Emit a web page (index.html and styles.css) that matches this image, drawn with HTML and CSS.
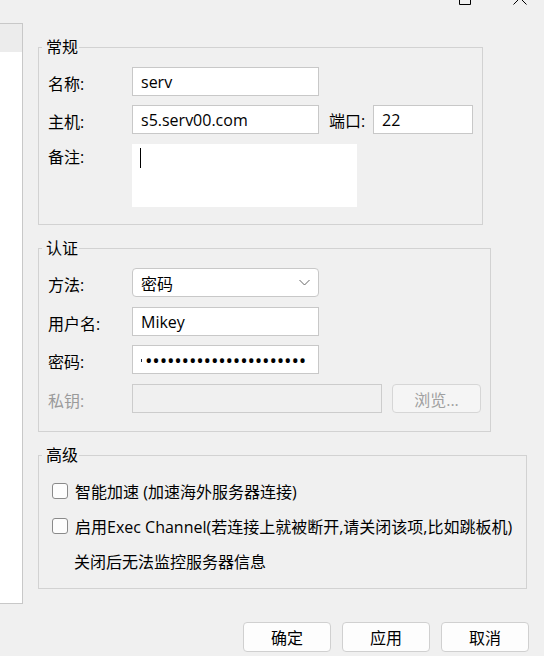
FILE: index.html
```html
<!DOCTYPE html>
<html lang="zh-CN">
<head>
<meta charset="utf-8">
<title>会话设置</title>
<link rel="stylesheet" href="styles.css">
</head>
<body>
<div class="window">
  <div class="titlebar">
    <svg class="tb-icon" width="12" height="5" viewBox="0 0 12 5"><path d="M0.5 0V4.5H11.5V0" fill="none" stroke="#000" stroke-width="1"/></svg>
    <svg class="tb-icon" width="14" height="5" viewBox="0 0 14 5"><path d="M7 -2L0.5 4.5M7 -2L13.5 4.5" fill="none" stroke="#000" stroke-width="1"/></svg>
  </div>
  <div class="main">
    <div class="session-list"><div class="list-head"></div></div>
    <div class="form">
      <fieldset class="group g1">
        <legend>常规</legend>
        <div class="group-body b1">
          <div class="row">
            <span class="label">名称:</span>
            <div class="field w-main">serv</div>
          </div>
          <div class="row gap9">
            <span class="label">主机:</span>
            <div class="field w-main">s5.serv00.com</div>
            <span class="port-label">端口:</span>
            <div class="field w-port">22</div>
          </div>
          <div class="row remark-row gap10">
            <span class="label remark-label">备注:</span>
            <div class="remark"><span class="caret"></span></div>
          </div>
        </div>
      </fieldset>

      <fieldset class="group g2">
        <legend>认证</legend>
        <div class="group-body b2">
          <div class="row">
            <span class="label">方法:</span>
            <div class="field select w-main"><span>密码</span>
              <svg class="chevron" width="11" height="7" viewBox="0 0 11 7"><path d="M0.5 1L5.5 6L10.5 1" fill="none" stroke="#666" stroke-width="1"/></svg>
            </div>
          </div>
          <div class="row gap10">
            <span class="label">用户名:</span>
            <div class="field w-main">Mikey</div>
          </div>
          <div class="row gap9">
            <span class="label">密码:</span>
            <div class="field pw w-main"><span class="pw-sliver"></span><span class="dots">••••••••••••••••••••••</span></div>
          </div>
          <div class="row gap10">
            <span class="label disabled-label">私钥:</span>
            <div class="field disabled w-key"></div>
            <div class="btn btn-disabled browse">浏览...</div>
          </div>
        </div>
      </fieldset>

      <fieldset class="group g3">
        <legend>高级</legend>
        <div class="group-body b3">
          <div class="crow"><span class="check"></span><span>智能加速 (加速海外服务器连接)</span></div>
          <div class="crow"><span class="check"></span><span>启用Exec Channel(若连接上就被断开,请关闭该项,比如跳板机)</span></div>
          <div class="crow note">关闭后无法监控服务器信息</div>
        </div>
      </fieldset>

      <div class="buttons">
        <div class="btn">确定</div>
        <div class="btn">应用</div>
        <div class="btn">取消</div>
      </div>
    </div>
  </div>
</div>
</body>
</html>
```

FILE: styles.css
```css
* { box-sizing: border-box; }
html, body { margin: 0; padding: 0; }
body {
  background: #f0f0f0;
  font-family: "Open Sans", "Noto Sans CJK SC", sans-serif;
  font-size: 16px;
  color: #000;
  width: 544px;
  height: 656px;
  overflow: hidden;
}
.titlebar {
  height: 23px;
  display: flex;
  justify-content: flex-end;
  align-items: flex-start;
  gap: 42px;
  padding-right: 17px;
}
.tb-icon { display: block; }
.main { display: flex; align-items: flex-start; }
.session-list {
  flex: none;
  width: 23px;
  height: 581px;
  background: #fff;
  border: 1px solid #c8c8c8;
  border-left: none;
}
.list-head { height: 28px; background: #ececec; }
.form { flex: 1; margin-left: 15px; padding-top: 15px; }

.group {
  margin: 0;
  padding: 0;
  border: 1px solid #d2d2d2;
  min-width: 0;
}
.group legend {
  margin-left: 3px;
  padding: 0 1px 0 4px;
  line-height: 18px;
  height: 18px;
}
.g1 { width: 445px; }
.g2 { width: 453px; margin-top: 14px; }
.g3 { width: 489px; margin-top: 14px; }
.b1 { padding: 11px 0 17px 9px; }
.b2 { padding: 11px 0 18px 9px; }
.b3 { padding: 9px 0 10px 13px; }

.row { display: flex; align-items: center; height: 29px; }
.gap9 { margin-top: 9px; }
.gap10 { margin-top: 10px; }
.label { flex: none; width: 84px; padding-top: 2px; }
.field {
  flex: none;
  height: 29px;
  background: #fff;
  border: 1px solid #c8c8c8;
  padding: 0 8px;
  display: flex;
  align-items: center;
  white-space: nowrap;
  overflow: hidden;
}
.w-main { width: 187px; }
.w-port { width: 100px; }
.w-key { width: 250px; }
.port-label { flex: none; width: 44px; margin-left: 10px; padding-top: 1px; }
.remark-row { height: 63px; align-items: flex-start; }
.remark-label { line-height: 27px; padding-top: 0; }
.remark {
  width: 225px;
  height: 63px;
  background: #fff;
  padding: 4px 8px;
}
.caret { display: block; width: 1px; height: 20px; background: #000; }
.select { border-radius: 4px; justify-content: space-between; padding-right: 8px; }
.chevron { display: block; }
.pw { padding-right: 0; }
.pw-sliver {
  flex: none;
  width: 1px;
  height: 3px;
  margin-top: 2px;
  background: #1b2a44;
  margin-right: 3px;
}
.dots {
  display: block;
  font-size: 20px;
  letter-spacing: -0.2px;
  line-height: 27px;
  margin-top: 1px;
}
.disabled { background: #f0f0f0; border-color: #cccccc; }
.disabled-label { color: #9a9a9a; }

.btn {
  flex: none;
  width: 88px;
  height: 30px;
  border: 1px solid #d0d0d0;
  border-radius: 4px;
  background: #fdfdfd;
  display: flex;
  align-items: center;
  justify-content: center;
}
.browse { width: 89px; height: 29px; margin-left: 10px; }
.btn-disabled { background: #f5f5f5; color: #a0a0a0; border-color: #d6d6d6; }

.crow { display: flex; align-items: center; height: 35px; white-space: nowrap; }
.check {
  flex: none;
  width: 16px;
  height: 16px;
  border: 1px solid #8a8a8a;
  border-radius: 3px;
  background: #fdfdfd;
  margin-right: 7px;
}
.note { padding-left: 22px; }

.buttons {
  display: flex;
  justify-content: flex-end;
  gap: 11px;
  margin-top: 33px;
  padding-right: 15px;
}
```
